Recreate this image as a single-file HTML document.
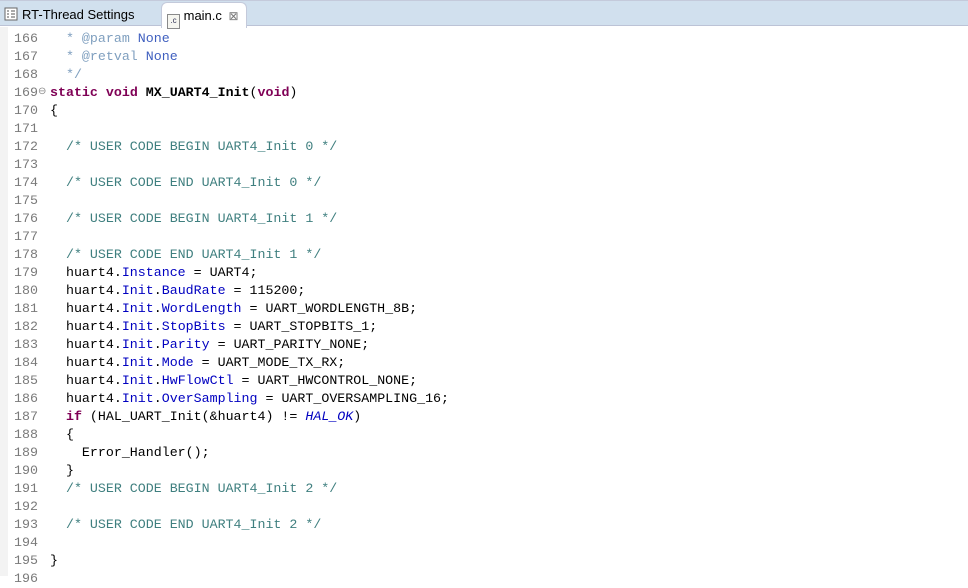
<!DOCTYPE html>
<html><head><meta charset="utf-8"><style>
html,body{margin:0;padding:0;width:968px;height:576px;overflow:hidden;background:#fff;font-family:"Liberation Sans",sans-serif}
#tabs{position:absolute;left:0;top:0;width:968px;height:26px;background:#d1e0ee;border-top:1px solid #c4cadb;border-bottom:1px solid #bcc3d6;box-sizing:border-box}
.tab{position:absolute;top:2px;height:24px;font-size:13px;color:#000;line-height:24px}
#t1{left:4px}
#t2{left:161px;width:86px;top:1px;height:26px;background:#fff;border:1px solid #c4cadb;border-bottom:none;border-radius:6px 6px 0 0;box-sizing:border-box;line-height:25px}
#gut{position:absolute;left:0;top:27px;width:8px;height:549px;background:#f3f3f3}
#code{position:absolute;left:0;top:30px;font-family:"Liberation Mono",monospace;font-size:13.3px;line-height:18px;white-space:pre;color:#000}
.ln{display:inline-block;width:50px;color:#7a7a7a;padding-left:14px;box-sizing:border-box}
.c{color:#3f7f7f}.d{color:#7f9fbf}.dn{color:#3f5fbf}.k{color:#7f0055;font-weight:bold}.f{color:#0000c0}.i{color:#0000c0;font-style:italic}.b{font-weight:bold}
</style></head><body>
<div id="tabs">
<div class="tab" id="t1"><svg width="14" height="14" style="vertical-align:-2px;margin-right:4px" viewBox="0 0 14 14"><rect x="1" y="1" width="12" height="12" fill="#fff" stroke="#666"/><path d="M3 4h2M7 4h4M3 7h2M7 7h4M3 10h2M7 10h4" stroke="#555"/></svg>RT-Thread Settings</div>
<div class="tab" id="t2"><span style="display:inline-block;margin-left:5px;width:11px;height:13px;border:1px solid #8a8a8a;font-size:8px;line-height:12px;vertical-align:-3px;text-align:center;color:#335;background:#f6f6f0">.c</span> main.c <span style="color:#777;font-size:12px;margin-left:3px">⊠</span></div>
</div>
<div id="gut"></div>
<div id="code"><span class="ln">166</span>  <span class="d">* @param</span> <span class="dn">None</span>
<span class="ln">167</span>  <span class="d">* @retval</span> <span class="dn">None</span>
<span class="ln">168</span>  <span class="d">*/</span>
<span class="ln">169<span style="position:absolute;left:38px;font-size:10px;color:#888">⊖</span></span><span class="k">static</span> <span class="k">void</span> <span class="b">MX_UART4_Init</span>(<span class="k">void</span>)
<span class="ln">170</span>{
<span class="ln">171</span>
<span class="ln">172</span>  <span class="c">/* USER CODE BEGIN UART4_Init 0 */</span>
<span class="ln">173</span>
<span class="ln">174</span>  <span class="c">/* USER CODE END UART4_Init 0 */</span>
<span class="ln">175</span>
<span class="ln">176</span>  <span class="c">/* USER CODE BEGIN UART4_Init 1 */</span>
<span class="ln">177</span>
<span class="ln">178</span>  <span class="c">/* USER CODE END UART4_Init 1 */</span>
<span class="ln">179</span>  huart4.<span class="f">Instance</span> = UART4;
<span class="ln">180</span>  huart4.<span class="f">Init</span>.<span class="f">BaudRate</span> = 115200;
<span class="ln">181</span>  huart4.<span class="f">Init</span>.<span class="f">WordLength</span> = UART_WORDLENGTH_8B;
<span class="ln">182</span>  huart4.<span class="f">Init</span>.<span class="f">StopBits</span> = UART_STOPBITS_1;
<span class="ln">183</span>  huart4.<span class="f">Init</span>.<span class="f">Parity</span> = UART_PARITY_NONE;
<span class="ln">184</span>  huart4.<span class="f">Init</span>.<span class="f">Mode</span> = UART_MODE_TX_RX;
<span class="ln">185</span>  huart4.<span class="f">Init</span>.<span class="f">HwFlowCtl</span> = UART_HWCONTROL_NONE;
<span class="ln">186</span>  huart4.<span class="f">Init</span>.<span class="f">OverSampling</span> = UART_OVERSAMPLING_16;
<span class="ln">187</span>  <span class="k">if</span> (HAL_UART_Init(&amp;huart4) != <span class="i">HAL_OK</span>)
<span class="ln">188</span>  {
<span class="ln">189</span>    Error_Handler();
<span class="ln">190</span>  }
<span class="ln">191</span>  <span class="c">/* USER CODE BEGIN UART4_Init 2 */</span>
<span class="ln">192</span>
<span class="ln">193</span>  <span class="c">/* USER CODE END UART4_Init 2 */</span>
<span class="ln">194</span>
<span class="ln">195</span>}
<span class="ln">196</span>
</div>
</body></html>
